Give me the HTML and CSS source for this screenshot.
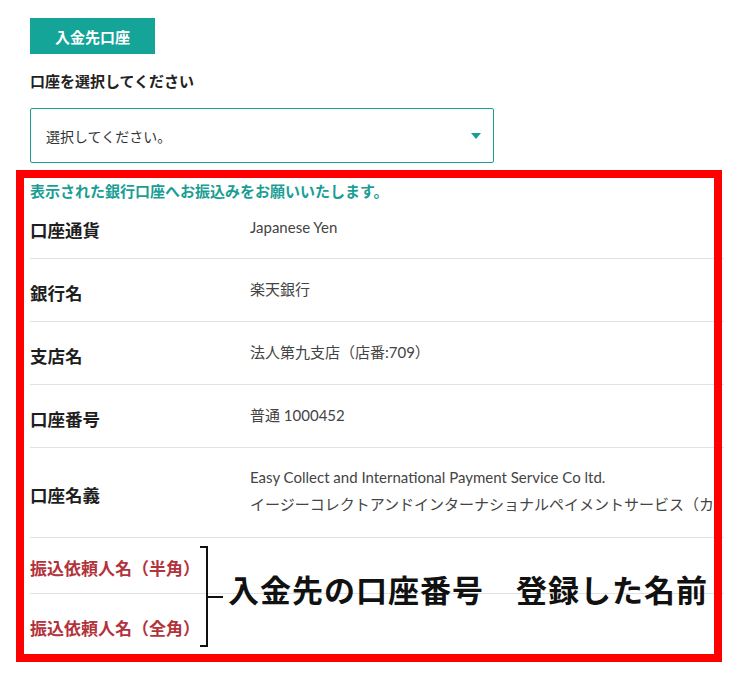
FILE: index.html
```
<!DOCTYPE html>
<html lang="ja">
<head>
<meta charset="utf-8">
<title>入金先口座</title>
<link rel="stylesheet" href="styles.css">
</head>
<body>
<div class="page">
  <div class="tab">入金先口座</div>
  <div class="field-label">口座を選択してください</div>
  <div class="select">
    <span class="select-text">選択してください。</span>
    <span class="caret"></span>
  </div>
  <div class="notice">表示された銀行口座へお振込みをお願いいたします。</div>
  <div class="rows">
    <div class="row">
      <div class="label">口座通貨</div>
      <div class="value">Japanese Yen</div>
    </div>
    <div class="row">
      <div class="label">銀行名</div>
      <div class="value">楽天銀行</div>
    </div>
    <div class="row">
      <div class="label">支店名</div>
      <div class="value">法人第九支店（店番:709）</div>
    </div>
    <div class="row">
      <div class="label">口座番号</div>
      <div class="value">普通 1000452</div>
    </div>
    <div class="row row-tall">
      <div class="label">口座名義</div>
      <div class="value multi">Easy Collect and International Payment Service Co ltd.<br>イージーコレクトアンドインターナショナルペイメントサービス（カ</div>
    </div>
    <div class="row row-red">
      <div class="label red">振込依頼人名（半角）</div>
      <div class="value"></div>
    </div>
    <div class="row row-red last">
      <div class="label red">振込依頼人名（全角）</div>
      <div class="value"></div>
    </div>
  </div>
</div>
<div class="frame"></div>
<svg class="bracket" width="30" height="104" viewBox="0 0 30 104">
  <path d="M4 2 H11 V101 H4 M11 52 H27" fill="none" stroke="#111" stroke-width="2"/>
</svg>
<div class="annotation">入金先の口座番号　登録した名前</div>
</body>
</html>
```
FILE: styles.css
```
html, body {
  margin: 0;
  padding: 0;
  background: #fff;
}
body {
  font-family: "Noto Sans CJK JP", "Noto Sans", sans-serif;
  color: #222;
  position: relative;
  width: 742px;
  height: 677px;
  overflow: hidden;
}
.page {
  width: 724px;
  box-sizing: border-box;
  padding: 18px 0 0 30px;
  overflow: hidden;
}
.tab {
  width: 125px;
  height: 36px;
  background: #14a598;
  color: #fff;
  font-weight: 700;
  font-size: 15px;
  display: flex;
  align-items: center;
  justify-content: center;
}
.field-label {
  margin-top: 17px;
  font-size: 15px;
  font-weight: 700;
  line-height: 20px;
  color: #222;
}
.select {
  margin-top: 17px;
  width: 464px;
  height: 55px;
  box-sizing: border-box;
  border: 1px solid #1c9e96;
  border-radius: 2px;
  display: flex;
  align-items: center;
  justify-content: space-between;
  padding: 0 12px 0 15px;
}
.select-text {
  font-size: 14px;
  color: #333;
}
.caret {
  width: 0;
  height: 0;
  border-left: 5px solid transparent;
  border-right: 5px solid transparent;
  border-top: 6px solid #1a9e94;
}
.notice {
  margin-top: 18px;
  font-size: 15px;
  font-weight: 700;
  line-height: 20px;
  color: #1a9e94;
  white-space: nowrap;
}
.rows {
  display: flex;
  flex-direction: column;
}
.row {
  display: flex;
  align-items: center;
  height: 63px;
  box-sizing: border-box;
  border-bottom: 1px solid #e2e2e2;
}
.row:first-child {
  height: 58px;
}
.row:first-child .label {
  padding-top: 0;
}
.row:first-child .value {
  padding-bottom: 5px;
}
.row-tall {
  height: 90px;
}
.row-red {
  height: 56px;
}
.row.last {
  border-bottom: none;
  height: 62px;
}
.label {
  width: 220px;
  flex: none;
  font-size: 17.5px;
  font-weight: 700;
  color: #1e1e1e;
  padding-top: 4px;
}
.label.red {
  font-size: 17px;
  color: #b2333b;
  padding-top: 4px;
}
.value {
  font-family: "Lato", "Noto Sans CJK JP", sans-serif;
  font-size: 15px;
  color: #444;
  white-space: nowrap;
  padding-bottom: 3px;
}
.value.multi {
  line-height: 27px;
}
.frame {
  position: absolute;
  left: 16px;
  top: 170px;
  width: 706px;
  height: 492px;
  box-sizing: border-box;
  border: 8px solid #ff0000;
}
.bracket {
  position: absolute;
  left: 196px;
  top: 545px;
}
.annotation {
  position: absolute;
  left: 228px;
  top: 569px;
  font-size: 31px;
  line-height: 40px;
  font-weight: 700;
  letter-spacing: 1px;
  color: #111;
  white-space: nowrap;
}
```
